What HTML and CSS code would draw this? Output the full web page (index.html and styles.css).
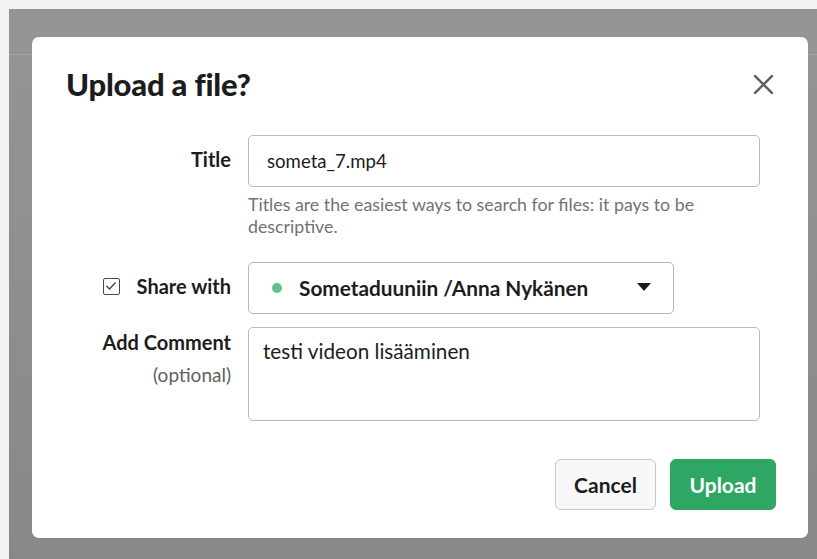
FILE: index.html
```html
<!DOCTYPE html>
<html lang="fi">
<head>
<meta charset="utf-8">
<title>Upload a file?</title>
<link rel="stylesheet" href="styles.css">
</head>
<body>
<div class="backdrop">
  <div class="modal" role="dialog" aria-labelledby="modal-title">
    <header class="modal-head">
      <h1 id="modal-title" class="modal-title">Upload a file?</h1>
      <button class="close" aria-label="Close">
        <svg width="21" height="21" viewBox="0 0 20 20"><path d="M2 2 L18 18 M18 2 L2 18" stroke="#616061" stroke-width="2.4" stroke-linecap="round" fill="none"/></svg>
      </button>
    </header>

    <div class="form">
      <label class="label label-title" for="title">Title</label>
      <div class="field">
        <input id="title" class="input" type="text" value="someta_7.mp4">
        <p class="hint">Titles are the easiest ways to search for files: it pays to be descriptive.</p>
      </div>

      <label class="label label-share">
        <span class="checkbox">
          <svg width="12" height="10" viewBox="0 0 12 10"><path d="M1.5 5 L4.5 8 L10.5 1.5" stroke="#4a4a4a" stroke-width="1.4" fill="none"/></svg>
        </span>
        Share with
      </label>
      <div class="field">
        <div class="select">
          <span class="dot"></span>
          <span class="select-text">Sometaduuniin /Anna Nykänen</span>
          <span class="caret"></span>
        </div>
      </div>

      <div class="label label-comment">
        <span>Add Comment</span>
        <span class="optional">(optional)</span>
      </div>
      <div class="field">
        <div class="textarea">testi videon lisääminen</div>
      </div>
    </div>

    <footer class="actions">
      <button class="btn btn-cancel">Cancel</button>
      <button class="btn btn-upload">Upload</button>
    </footer>
  </div>
</div>
</body>
</html>
```

FILE: styles.css
```css
* { box-sizing: border-box; }

html, body {
  margin: 0;
  height: 100%;
}

body {
  background: #f2f2f2;
  padding: 9px 0 0 9px;
  font-family: Lato, "Open Sans", sans-serif;
  color: #1d1c1d;
  overflow: hidden;
}

.backdrop {
  position: relative;
  height: 100%;
  background: linear-gradient(to bottom, #959595, #888888);
  padding: 28px 0 0 23px;
}

/* faint header border of the page underneath */
.backdrop::before {
  content: "";
  position: absolute;
  left: 0;
  right: 0;
  top: 45px;
  height: 1px;
  background: #a3a3a3;
}

.modal {
  position: relative;
  width: 776px;
  height: 501px;
  background: #fff;
  border-radius: 7px;
  padding: 26px 32px 28px 34px;
  display: flex;
  flex-direction: column;
}

.modal-head {
  display: flex;
  align-items: center;
  justify-content: space-between;
  height: 42px;
}

.modal-title {
  margin: 0;
  font-size: 31px;
  font-weight: 900;
  letter-spacing: -0.2px;
}

.close {
  border: 0;
  background: none;
  padding: 0;
  width: 22px;
  height: 22px;
  margin-right: 2px;
  display: flex;
  align-items: center;
  justify-content: center;
}

.form {
  margin-top: 30px;
  display: grid;
  grid-template-columns: 165px 512px;
  column-gap: 17px;
  row-gap: 13px;
  align-items: start;
}

.label {
  font-weight: 700;
  font-size: 20px;
  text-align: right;
}

.label-title {
  padding-top: 12px;
}

.label-share {
  display: flex;
  align-items: center;
  justify-content: flex-end;
  gap: 17px;
  padding-top: 12px;
}

.checkbox {
  width: 17px;
  height: 17px;
  border: 1.5px solid #4a4a4a;
  border-radius: 2px;
  display: flex;
  align-items: center;
  justify-content: center;
}

.label-comment {
  display: flex;
  flex-direction: column;
  align-items: flex-end;
  padding-top: 3px;
}

.optional {
  font-weight: 400;
  color: #616061;
  font-size: 19px;
  margin-top: 9px;
}

.input {
  display: block;
  width: 512px;
  height: 52px;
  border: 1px solid #b9b9b9;
  border-radius: 5px;
  padding: 0 18px;
  font-family: inherit;
  font-size: 18.6px;
  color: #1d1c1d;
  outline: none;
}

.hint {
  margin: 6px 0 12px;
  font-size: 17.8px;
  line-height: 22px;
  color: #717274;
  width: 480px;
}

.select {
  width: 426px;
  height: 52px;
  border: 1px solid #b9b9b9;
  border-radius: 5px;
  display: flex;
  align-items: center;
  padding: 0 22px 0 23px;
  font-weight: 700;
  font-size: 20.8px;
}

.dot {
  width: 10px;
  height: 10px;
  border-radius: 50%;
  background: #64bf8e;
  margin-right: 17px;
}

.select-text {
  flex: 1;
  margin-top: -2px;
}

.caret {
  width: 0;
  height: 0;
  border-left: 7px solid transparent;
  border-right: 7px solid transparent;
  border-top: 8px solid #1d1c1d;
  margin-top: -2px;
}

.textarea {
  width: 512px;
  height: 94px;
  border: 1px solid #b9b9b9;
  border-radius: 5px;
  padding: 11px 14px;
  font-size: 20.7px;
}

.actions {
  margin-top: auto;
  display: flex;
  justify-content: flex-end;
  gap: 14px;
}

.btn {
  height: 51px;
  border-radius: 6px;
  font-family: inherit;
  font-weight: 700;
  font-size: 21px;
  padding: 0 16px;
}

.btn-cancel {
  width: 101px;
  background: #f8f8f8;
  border: 1px solid #c8c8c8;
  color: #1d1c1d;
}

.btn-upload {
  width: 106px;
  background: #2ea664;
  border: 1px solid #2ea664;
  color: #fff;
}
```
